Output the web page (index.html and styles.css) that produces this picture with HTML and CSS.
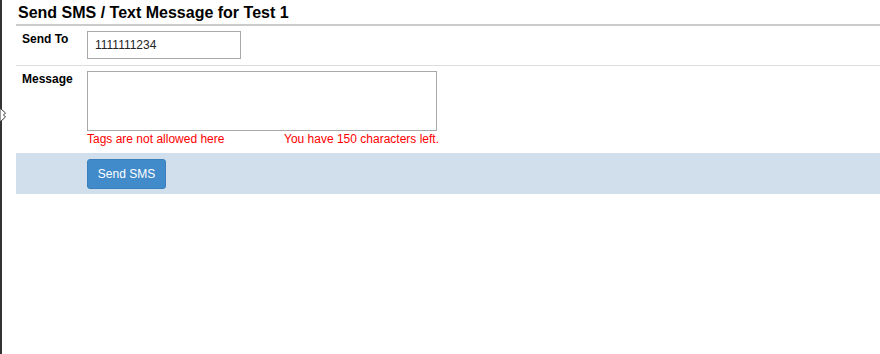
FILE: index.html
```html
<!DOCTYPE html>
<html lang="en">
<head>
  <meta charset="UTF-8" />
  <title>Send SMS / Text Message</title>
  <link rel="stylesheet" href="styles.css">
</head>
<body>

  <div class="frame">
    <svg class="edge-grip" width="7" height="14" viewBox="0 0 7 14">
      <path d="M0.5 0.5 L5.5 5 L3.5 7 L5.5 9 L0.5 13.5" fill="#fff" stroke="#333" stroke-width="1"/>
    </svg>

    <div class="panel">
      <h2 class="panel-title">Send SMS / Text Message for Test 1</h2>

      <form class="sms-form" onsubmit="return false">
        <div class="form-row">
          <label class="form-label" for="send-to">Send To</label>
          <div class="form-field">
            <input type="text" id="send-to" class="input-phone" value="1111111234" />
          </div>
        </div>

        <div class="form-row no-border">
          <label class="form-label" for="message">Message</label>
          <div class="form-field">
            <textarea id="message" class="input-message"></textarea>
            <div class="field-notes">
              <span class="note note-tags">Tags are not allowed here</span>
              <span class="note">You have 150 characters left.</span>
            </div>
          </div>
        </div>

        <div class="form-actions">
          <button type="submit" class="btn-send">Send SMS</button>
        </div>
      </form>
    </div>
  </div>

</body>
</html>
```

FILE: styles.css
```css
html, body {
  margin: 0;
  padding: 0;
  background: #fff;
}

body {
  font-family: "Liberation Sans", Arial, sans-serif;
  font-size: 12px;
  color: #000;
}

.frame {
  position: relative;
  min-height: 354px;
  border-left: 2px solid #333;
  box-sizing: border-box;
}

.edge-grip {
  position: absolute;
  left: -2px;
  top: 108px;
}

.panel {
  margin-left: 14px;
}

.panel-title {
  margin: 0;
  padding: 4px 0 2px 2px;
  font-size: 16px;
  line-height: 18px;
  font-weight: bold;
  border-bottom: 2px solid #cbcbcb;
}

.form-row {
  display: flex;
  padding: 5px 0 6px;
  border-bottom: 1px solid #dcdcdc;
}

.form-row.no-border {
  border-bottom: none;
  padding-bottom: 7px;
}

.form-label {
  width: 65px;
  padding: 1px 0 0 6px;
  font-weight: bold;
  line-height: 14px;
}

.form-field {
  display: flex;
  flex-direction: column;
}

.input-phone {
  width: 154px;
  height: 28px;
  box-sizing: border-box;
  border: 1px solid #a9a9a9;
  padding: 0 7px;
  font-family: inherit;
  font-size: 12px;
  color: #222;
  margin: 0;
}

.input-message {
  width: 350px;
  height: 60px;
  box-sizing: border-box;
  border: 1px solid #a9a9a9;
  margin: 0;
  padding: 2px;
  resize: none;
  font-family: inherit;
  font-size: 12px;
  display: block;
}

.field-notes {
  display: flex;
  padding-top: 1px;
  line-height: 14px;
}

.note {
  color: #ff0000;
}

.note-tags {
  width: 197px;
}

.form-actions {
  background: #d0dfeb;
  padding: 6px 0 5px 71px;
}

.btn-send {
  width: 79px;
  height: 30px;
  background: #428bca;
  border: 1px solid #3a7fbc;
  border-radius: 3px;
  color: #fff;
  font-family: inherit;
  font-size: 12px;
  padding: 0;
  margin: 0;
  display: block;
  cursor: pointer;
}

.btn-send:hover {
  background: #3276b1;
}
```
